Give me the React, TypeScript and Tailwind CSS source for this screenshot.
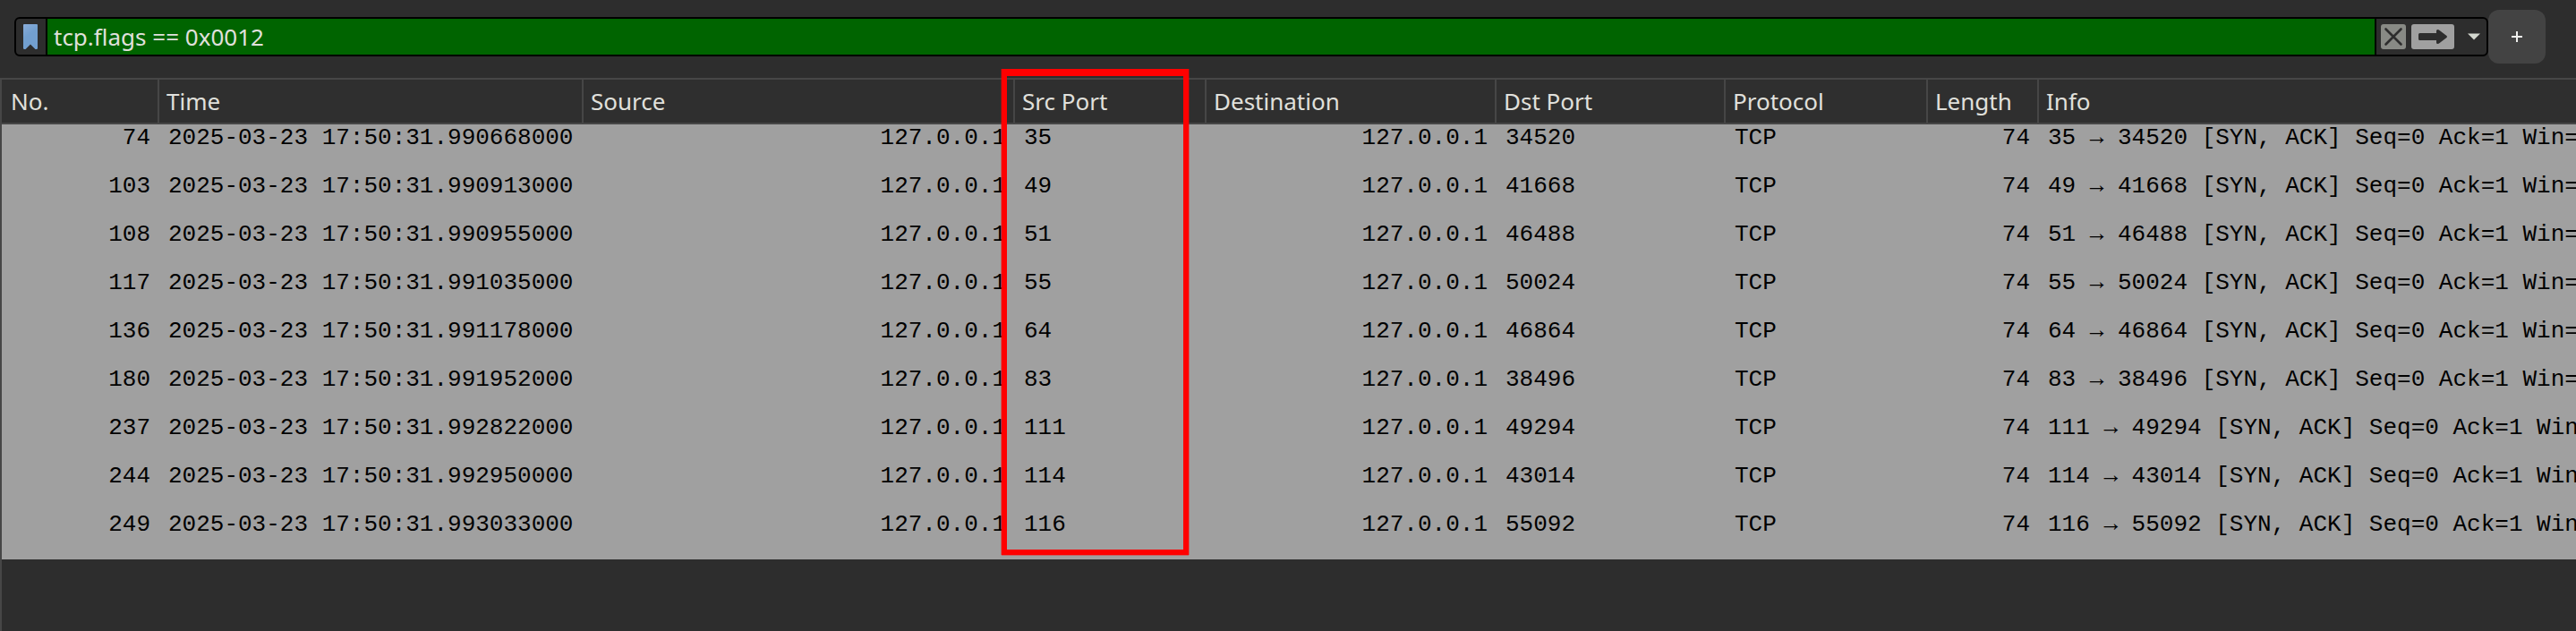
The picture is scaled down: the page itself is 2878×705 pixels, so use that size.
import React from "react";

type Column = { title: string; width: string; align: string };

const columns: Column[] = [
  { title: "No.", width: "w-[176px]", align: "text-right pr-[10px]" },
  { title: "Time", width: "w-[474px]", align: "pl-[10px]" },
  { title: "Source", width: "w-[482px]", align: "text-right pr-[10px]" },
  { title: "Src Port", width: "w-[214px]", align: "pl-[10px]" },
  { title: "Destination", width: "w-[324px]", align: "text-right pr-[10px]" },
  { title: "Dst Port", width: "w-[256px]", align: "pl-[10px]" },
  { title: "Protocol", width: "w-[226px]", align: "pl-[10px]" },
  { title: "Length", width: "w-[124px]", align: "text-right pr-[10px]" },
  { title: "Info", width: "w-[600px]", align: "pl-[10px]" },
];

const packets = [
  { no: 74, time: "990668000", src: 35, dst: 34520 },
  { no: 103, time: "990913000", src: 49, dst: 41668 },
  { no: 108, time: "990955000", src: 51, dst: 46488 },
  { no: 117, time: "991035000", src: 55, dst: 50024 },
  { no: 136, time: "991178000", src: 64, dst: 46864 },
  { no: 180, time: "991952000", src: 83, dst: 38496 },
  { no: 237, time: "992822000", src: 111, dst: 49294 },
  { no: 244, time: "992950000", src: 114, dst: 43014 },
  { no: 249, time: "993033000", src: 116, dst: 55092 },
];

function FilterBar() {
  return (
    <div className="flex h-[87px] shrink-0 pl-4 pt-[11px]">
      <div className="mt-2 flex h-11 w-[2764px] shrink-0 overflow-hidden rounded-[6px] border-2 border-black bg-[#2d2d2d]">
        <div className="flex w-[35px] shrink-0 border-r-2 border-black pl-2 pt-[6px]">
          <svg width="16" height="28" viewBox="0 0 16 28">
            <defs>
              <linearGradient id="mark" x1="0" y1="0" x2="0.4" y2="1">
                <stop offset="0" stopColor="#8aaedb" />
                <stop offset="0.5" stopColor="#729fcf" />
              </linearGradient>
            </defs>
            <path d="M1 0h14q1 0 1 1v26q0 1-1.500 1h-1L8 22.500 2.500 28h-1Q0 28 0 27V1q0-1 1-1z" fill="url(#mark)" />
          </svg>
        </div>
        <div className="h-10 grow bg-[#006400] pl-[7px] text-[26px] leading-[40px] text-[#e0e0dc]">
          tcp.flags == 0x0012
        </div>
        <div className="flex w-[125px] shrink-0 items-center border-l-2 border-black pl-[5px]">
          <svg width="28" height="28" viewBox="0 0 28 28">
            <rect width="28" height="28" rx="3" fill="#888a85" />
            <path d="M5.500 5.500l17 17M22.500 5.500l-17 17" stroke="#2d2d2d" strokeWidth="2.600" strokeLinecap="round" />
          </svg>
          <svg className="ml-[6px]" width="48" height="28" viewBox="0 0 48 28">
            <rect width="48" height="28" rx="3" fill="#a0a0a0" />
            <path d="M9.500 10H28V7.500q0-1.500 1.500-1.500 1 0 1.800.8L39.500 13q1 1 0 2l-8.200 6.200q-.8.800-1.800.8-1.500 0-1.500-1.500V18H9.500Q8 18 8 16.500v-5Q8 10 9.500 10z" fill="#2d2d2d" />
          </svg>
          <svg className="ml-[15px]" width="14" height="8" viewBox="0 0 14 8">
            <path d="M0 .5h14L7 7.500z" fill="#d3d7cf" />
          </svg>
        </div>
      </div>
      <button className="flex h-[60px] w-16 items-center justify-center rounded-[12px] bg-[#434343]">
        <svg width="12" height="12" viewBox="0 0 12 12">
          <path d="M0 6h12M6 0v12" stroke="#eeeeec" strokeWidth="2" />
        </svg>
      </button>
    </div>
  );
}

function PacketList() {
  return (
    <div className="w-[2878px] overflow-hidden border-l-2 border-t-2 border-[#464646]">
      <div className="flex h-[50px] w-[2900px] border-b-2 border-[#464646] bg-[#2f2f2f] text-[26px] leading-[48px] text-[#e0e0dc]">
        {columns.map((c, i) => (
          <div
            key={c.title}
            className={`${c.width} shrink-0 border-[#464646] ${i === 0 ? "pl-[10px]" : "pl-[8px]"} ${i < 8 ? "border-r-2" : ""}`}
          >
            {c.title}
          </div>
        ))}
      </div>
      {packets.map((p) => {
        const cells = [
          p.no,
          `2025-03-23 17:50:31.${p.time}`,
          "127.0.0.1",
          p.src,
          "127.0.0.1",
          p.dst,
          "TCP",
          74,
          `${p.src} → ${p.dst} [SYN, ACK] Seq=0 Ack=1 Win=`,
        ];
        return (
          <div
            key={p.no}
            className="flex h-[54px] w-[2900px] whitespace-pre bg-[#a0a0a0] font-['Liberation_Mono',monospace] text-[26px] leading-[30px] text-black"
          >
            {cells.map((v, i) => (
              <div key={i} className={`${columns[i].width} ${columns[i].align} shrink-0`}>
                {v}
              </div>
            ))}
          </div>
        );
      })}
    </div>
  );
}

export default function App() {
  return (
    <div className="relative flex h-[705px] w-[2878px] flex-col overflow-hidden bg-[#2d2d2d] font-['Noto_Sans',sans-serif]">
      <FilterBar />
      <PacketList />
      <div className="grow border-l-2 border-[#464646]" />
      <div className="absolute left-[1119px] top-[77px] h-[543px] w-[209px] border-[6px] border-t-[8px] border-[#ff0000] shadow-[1px_0_0_0_rgba(255,0,0,0.35),-1px_0_0_0_rgba(255,0,0,0.35),0_1px_0_0_rgba(255,0,0,0.35)]" />
    </div>
  );
}
